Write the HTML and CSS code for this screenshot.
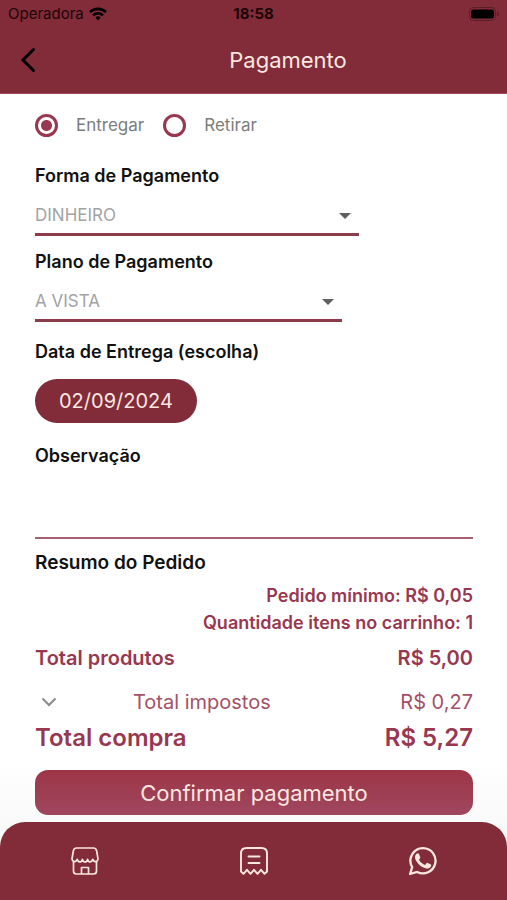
FILE: index.html
```html
<!DOCTYPE html>
<html lang="pt-BR">
<head>
<meta charset="utf-8">
<meta name="viewport" content="width=device-width, initial-scale=1">
<title>Pagamento</title>
<link rel="stylesheet" href="styles.css">
</head>
<body>
<header class="header">
  <div class="status">
    <div class="carrier">
      <span>Operadora</span>
      <svg width="18" height="14" viewBox="0 0 18 14" fill="none" stroke="#000" stroke-width="2.6" aria-hidden="true"><path d="M1 5.2a11.3 11.3 0 0 1 16 0M4 8.3a7 7 0 0 1 10 0"/><path d="M6.4 10.6a3.7 3.7 0 0 1 5.2 0L9 13.4z" fill="#000" stroke="none"/></svg>
    </div>
    <span class="clock">18:58</span>
    <div class="battery">
      <svg width="30" height="14" viewBox="0 0 30 14" aria-hidden="true"><rect x=".5" y=".5" width="26" height="13" rx="4" fill="none" stroke="#5b1f29"/><rect x="2" y="2.500" width="23" height="9" rx="2.500" fill="#000"/><path d="M28 4.500a2.600 2.600 0 0 1 0 5z" fill="#5b1f29"/></svg>
    </div>
  </div>
  <div class="appbar">
    <button class="back" type="button" aria-label="Voltar">
      <svg width="16" height="26" viewBox="0 0 16 26" fill="none" stroke="#000" stroke-width="3" aria-hidden="true"><path d="M13.500 2.500 3 13l10.500 10.500" stroke-linecap="round"/></svg>
    </button>
    <h1 class="title">Pagamento</h1>
  </div>
</header>

<main class="content">
  <form class="form">
    <div class="radios">
      <label class="radio"><input type="radio" name="modo" checked><span>Entregar</span></label>
      <label class="radio"><input type="radio" name="modo"><span>Retirar</span></label>
    </div>

    <div class="field">
      <label class="label" for="forma">Forma de Pagamento</label>
      <div class="select select-wide">
        <select id="forma"><option>DINHEIRO</option></select>
        <svg class="caret" width="12" height="6" viewBox="0 0 12 6" aria-hidden="true"><path d="M0 0h12L6 6z" fill="#5f5f5f"/></svg>
      </div>
    </div>

    <div class="field">
      <label class="label" for="plano">Plano de Pagamento</label>
      <div class="select">
        <select id="plano"><option>A VISTA</option></select>
        <svg class="caret" width="12" height="6" viewBox="0 0 12 6" aria-hidden="true"><path d="M0 0h12L6 6z" fill="#5f5f5f"/></svg>
      </div>
    </div>

    <div class="field date-field">
      <label class="label" for="data">Data de Entrega (escolha)</label>
      <button class="date" id="data" type="button">02/09/2024</button>
    </div>

    <div class="field">
      <label class="label" for="obs">Observação</label>
      <textarea class="notes" id="obs"></textarea>
    </div>

    <section class="summary">
      <h2 class="label heading">Resumo do Pedido</h2>
      <p class="notice first">Pedido mínimo: R$ 0,05</p>
      <p class="notice">Quantidade itens no carrinho: 1</p>
      <div class="row products"><span>Total produtos</span><span>R$ 5,00</span></div>
      <div class="row taxes">
        <button class="expand" type="button" aria-label="Mostrar impostos">
          <svg width="16" height="10" viewBox="0 0 16 10" fill="none" stroke="#8a8a8a" stroke-width="2" aria-hidden="true"><path d="m1.500 1.500 6.500 6.500 6.500-6.500"/></svg>
        </button>
        <span class="tax-name">Total impostos</span><span>R$ 0,27</span>
      </div>
      <div class="row total"><span>Total compra</span><span>R$ 5,27</span></div>
    </section>

    <button class="confirm" type="button">Confirmar pagamento</button>
  </form>
</main>

<nav class="tabs">
  <a href="#loja" aria-label="Loja">
    <svg width="28" height="28" viewBox="0 0 28 28" fill="none" stroke="currentColor" stroke-width="1.700" stroke-linejoin="round" stroke-linecap="round" aria-hidden="true"><path d="M5.500 1h17c2 0 2.800 1 3.200 3l1.300 8c-.2 2.600-3.600 4.200-5.200.4-1.200 3.400-4.200 3.400-5.200 0-1 3.400-4.200 3.400-5.200 0-1 3.400-4 3.400-5.200 0C4.600 16.200 1.200 14.600 1 12l1.300-8c.4-2 1.200-3 3.200-3z"/><path d="M2.500 14.500V24c0 2 1 3 3 3h17c2 0 3-1 3-3v-9.500M10.500 26.500v-6h7v6"/></svg>
  </a>
  <a href="#pedidos" aria-label="Pedidos">
    <svg width="28" height="28" viewBox="0 0 28 28" fill="none" stroke="currentColor" stroke-width="1.900" stroke-linejoin="round" stroke-linecap="round" aria-hidden="true"><path d="M1 24.500V6.500C1 2.800 2.800 1 6.500 1h15C25.200 1 27 2.800 27 6.500v18l-2.500 2.300-3.500-4-3.500 4-3.500-4-3.500 4-3.500-4-3.500 4zM8.500 9.500h11M8.500 16h11"/></svg>
  </a>
  <a href="#whatsapp" aria-label="WhatsApp">
    <svg width="28" height="28" viewBox="0 0 24 24" fill="currentColor" aria-hidden="true"><path transform="translate(-1.8 -1.800) scale(1.150)" d="M17.472 14.382c-.297-.149-1.758-.867-2.030-.967-.273-.099-.471-.148-.670.150-.197.297-.767.966-.940 1.164-.173.199-.347.223-.644.075-.297-.150-1.255-.463-2.390-1.475-.883-.788-1.480-1.761-1.653-2.059-.173-.297-.018-.458.130-.606.134-.133.298-.347.446-.520.149-.174.198-.298.298-.497.099-.198.050-.371-.025-.520-.075-.149-.669-1.612-.916-2.207-.242-.579-.487-.500-.669-.510-.173-.008-.371-.010-.570-.010-.198 0-.520.074-.792.372-.272.297-1.040 1.016-1.040 2.479 0 1.462 1.065 2.875 1.213 3.074.149.198 2.096 3.200 5.077 4.487.709.306 1.262.489 1.694.625.712.227 1.360.195 1.871.118.571-.085 1.758-.719 2.006-1.413.248-.694.248-1.289.173-1.413-.074-.124-.272-.198-.570-.347z"/><path d="M12.200 1A10.800 10.800 0 0 0 2.700 17.200L1 23l6-1.600A10.800 10.800 0 1 0 12.200 1z" fill="none" stroke="currentColor" stroke-width="2"/></svg>
  </a>
</nav>
</body>
</html>
```
FILE: styles.css
```css
:root {
  --wine: #812c38;
  --berry: #983750;
  --cream: #fbe6e0;
}

* { box-sizing: border-box; }

body {
  margin: 0;
  min-height: 100vh;
  display: flex;
  flex-direction: column;
  background: linear-gradient(#fff 760px, #f8f8f8 840px);
  color: #111;
  font-family: Inter, "Liberation Sans", sans-serif;
  font-size: 17px;
}

button, select, textarea { font: inherit; color: inherit; }
button { border: 0; padding: 0; background: none; cursor: pointer; }
h1, h2, p { margin: 0; }
svg { display: block; }

.header {
  background: var(--wine);
  border-bottom: 1px solid #a04a5c;
}

.status {
  display: grid;
  grid-template-columns: 1fr auto 1fr;
  align-items: center;
  height: 27px;
  padding: 0 8px;
  color: #1c0508;
  font-size: 15px;
}
.carrier { display: flex; align-items: center; gap: 5px; }
.clock { font-weight: 700; }
.battery { justify-self: end; }

.appbar {
  display: flex;
  align-items: center;
  height: 66px;
}
.back {
  width: 69px;
  height: 48px;
  padding-left: 20px;
}
.title {
  flex: 1;
  text-align: center;
  color: var(--cream);
  font-size: 22px;
  font-weight: 400;
}

.content { flex: 1; padding: 15px 34px 7px 35px; }

.form { display: flex; flex-direction: column; }

.radios { display: flex; gap: 19px; height: 32px; }
.radio {
  display: flex;
  align-items: center;
  gap: 18px;
  color: #7d7d7d;
}
.radio input {
  appearance: none;
  width: 23px;
  height: 23px;
  margin: 0;
  border: 3px solid var(--berry);
  border-radius: 50%;
}
.radio input:checked {
  background: radial-gradient(circle, var(--berry) 5px, transparent 6px);
}

.field {
  display: flex;
  flex-direction: column;
  align-items: flex-start;
}
.radios + .field { margin-top: 23px; }
.field + .field { margin-top: 14px; }
.label {
  font-size: 18px;
  font-weight: 600;
  line-height: 24px;
}
.label.heading { font-size: 19px; }

.select {
  position: relative;
  width: 70%;
  border-bottom: 3px solid #8c3c4b;
}
.select-wide { width: 74%; }
.select select {
  appearance: none;
  display: block;
  width: 100%;
  height: 45px;
  padding: 9px 30px 0 0;
  border: 0;
  background: transparent;
  color: #a3a3a3;
}
.caret {
  position: absolute;
  right: 8px;
  bottom: 14px;
  pointer-events: none;
}

.field.date-field { margin-top: 18px; }
.date {
  height: 44px;
  margin-top: 15px;
  padding: 0 24px;
  border-radius: 22px;
  background: var(--wine);
  color: var(--cream);
  font-size: 20px;
}
.field.date-field + .field { margin-top: 21px; }

.notes {
  display: block;
  width: 100%;
  height: 71px;
  padding: 8px 0;
  border: 0;
  border-bottom: 2px solid #a8606f;
  background: transparent;
  resize: none;
}

.summary { margin-top: 12px; color: var(--berry); }
.summary .label { color: #111; }
.notice {
  text-align: right;
  font-size: 18px;
  font-weight: 600;
  line-height: 27px;
}
.notice.first { margin-top: 7px; }
.row {
  display: flex;
  justify-content: space-between;
  align-items: center;
}
.products {
  height: 44px;
  font-size: 20px;
  font-weight: 600;
}
.taxes {
  height: 44px;
  font-size: 20px;
  color: #a45166;
}
.expand {
  width: 98px;
  height: 32px;
  padding-left: 6px;
}
.tax-name { flex: 1; }
.total {
  height: 26px;
  font-size: 24px;
  font-weight: 600;
}

.confirm {
  height: 45px;
  margin-top: 20px;
  border-radius: 13px;
  background: linear-gradient(#9d3546, #9f4760);
  color: var(--cream);
  font-size: 22px;
}

.tabs {
  display: grid;
  grid-template-columns: repeat(3, 1fr);
  height: 78px;
  border-radius: 25px 25px 0 0;
  background: var(--wine);
  color: var(--cream);
}
.tabs a {
  display: grid;
  place-items: center;
  color: inherit;
}
```
